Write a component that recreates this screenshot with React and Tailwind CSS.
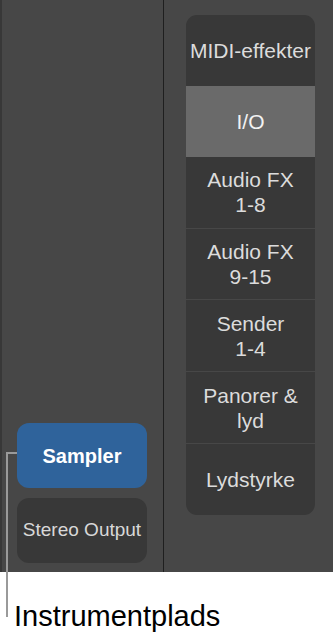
import React from "react";

const rows = [
  ["MIDI-effekter"],
  ["I/O"],
  ["Audio FX", "1-8"],
  ["Audio FX", "9-15"],
  ["Sender", "1-4"],
  ["Panorer &", "lyd"],
  ["Lydstyrke"],
];

const App = () => {
  return (
    <div
      className="relative w-[333px] h-[638px] bg-white overflow-hidden"
      style={{ fontFamily: '"Liberation Sans", Arial, sans-serif' }}
    >
      {/* Mixer strip */}
      <div className="flex h-[572px] bg-[#474747]">
        {/* Channel column */}
        <div className="w-[163px] border-l-2 border-[#383838] flex flex-col justify-end pl-[15px] pb-[9px] gap-[10px]">
          <div className="w-[130px] h-[65px] rounded-[12px] bg-[#2f639b] flex items-center justify-center text-white text-[20px] font-semibold">
            Sampler
          </div>
          <div className="w-[130px] h-[65px] rounded-[12px] bg-[#383838] flex items-center justify-center text-[#d8d8d8] text-[19px]">
            Stereo Output
          </div>
        </div>

        <div className="w-px bg-[#1f1f1f]" />

        {/* Inspector menu */}
        <div className="flex-1 pt-[15px] pl-[22px]">
          <div className="w-[129px] h-[500px] rounded-[11px] bg-[#383838] overflow-hidden flex flex-col">
            {rows.map((lines, i) => (
              <div
                key={i}
                className={
                  i === 1
                    ? "flex-1 flex flex-col items-center justify-center bg-[#6a6a6a] text-[#f2f2f2] text-[21px] leading-[25px]"
                    : i === 0 || i === 2
                    ? "flex-1 flex flex-col items-center justify-center text-[#dcdcdc] text-[21px] leading-[25px]"
                    : "flex-1 flex flex-col items-center justify-center border-t border-[#474747] text-[#dcdcdc] text-[21px] leading-[25px]"
                }
              >
                {lines.map((l) => (
                  <span key={l}>{l}</span>
                ))}
              </div>
            ))}
          </div>
        </div>
      </div>

      {/* Callout label */}
      <div className="pl-[14px] pt-[28px] text-black text-[29px] leading-[32px]">
        Instrumentplads
      </div>

      {/* Callout line */}
      <div className="absolute left-[6px] top-[452px] w-[2px] h-[165px] bg-[#9a9a9a]" />
      <div className="absolute left-[6px] top-[452px] w-[11px] h-[2px] bg-[#9a9a9a]" />
    </div>
  );
};

export default App;
